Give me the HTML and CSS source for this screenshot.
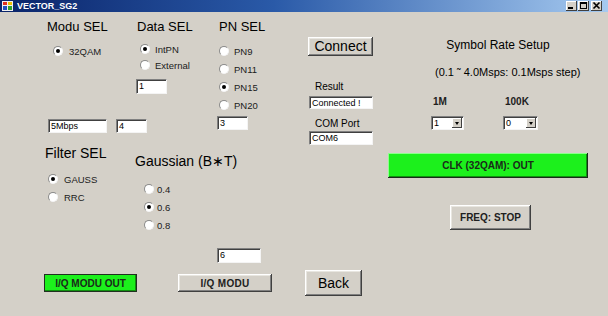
FILE: index.html
```html
<!DOCTYPE html>
<html lang="en">
<head>
  <meta charset="UTF-8" />
  <title>VECTOR_SG2</title>
  <link rel="stylesheet" href="styles.css">
</head>
<body>
  <div class="window">
    <div class="titlebar">
      <svg class="app-icon" width="11" height="10" viewBox="0 0 11 10">
        <rect x="0" y="0" width="11" height="10" fill="#f0f0f0"/>
        <rect x="1" y="1" width="4" height="3" fill="#e03020"/>
        <rect x="6" y="1" width="4" height="3" fill="#f0c000"/>
        <rect x="1" y="5" width="4" height="4" fill="#2050c0"/>
        <rect x="6" y="5" width="4" height="4" fill="#30a030"/>
      </svg>
      <span class="title">VECTOR_SG2</span>
      <div class="caption-buttons">
        <span class="cap-btn">
          <svg width="11" height="10" viewBox="0 0 11 10"><rect x="2" y="6" width="5" height="2" fill="#000"/></svg>
        </span>
        <span class="cap-btn">
          <svg width="11" height="10" viewBox="0 0 11 10"><rect x="2.5" y="1.5" width="6" height="6" fill="none" stroke="#000"/><rect x="2" y="1" width="7" height="2" fill="#000"/></svg>
        </span>
        <span class="cap-btn close">
          <svg width="11" height="10" viewBox="0 0 11 10"><path d="M2.5 1.5 L8.5 7.5 M8.5 1.5 L2.5 7.5" stroke="#000" stroke-width="1.6"/></svg>
        </span>
      </div>
    </div>

    <div class="form">
      <div class="left">
        <div class="top-band">
          <div class="col col-modu">
            <div class="heading">Modu SEL</div>
            <div class="radio-row"><span class="radio checked"></span>32QAM</div>
            <div class="field-row">
              <div class="textbox tb-rate">5Mbps</div>
              <div class="textbox tb-small">4</div>
            </div>
          </div>

          <div class="col col-data">
            <div class="heading">Data SEL</div>
            <div class="radio-list">
              <div class="radio-row"><span class="radio checked"></span>IntPN</div>
              <div class="radio-row"><span class="radio"></span>External</div>
            </div>
            <div class="textbox tb-small tb-data">1</div>
          </div>

          <div class="col col-pn">
            <div class="heading">PN SEL</div>
            <div class="radio-list">
              <div class="radio-row"><span class="radio"></span>PN9</div>
              <div class="radio-row"><span class="radio"></span>PN11</div>
              <div class="radio-row"><span class="radio checked"></span>PN15</div>
              <div class="radio-row"><span class="radio"></span>PN20</div>
            </div>
            <div class="textbox tb-small tb-pn">3</div>
          </div>

          <div class="col col-conn">
            <button class="btn btn-connect">Connect</button>
            <div class="small-label label-result">Result</div>
            <div class="textbox tb-conn">Connected !</div>
            <div class="small-label label-com">COM Port</div>
            <div class="textbox tb-conn tb-com">COM6</div>
          </div>
        </div>

        <div class="lower-band">
          <div class="col col-filter">
            <div class="heading heading-lg">Filter SEL</div>
            <div class="radio-list">
              <div class="radio-row"><span class="radio checked"></span>GAUSS</div>
              <div class="radio-row"><span class="radio"></span>RRC</div>
            </div>
          </div>

          <div class="col col-gauss">
            <div class="heading heading-lg">Gaussian (B&lowast;T)</div>
            <div class="radio-list">
              <div class="radio-row"><span class="radio"></span>0.4</div>
              <div class="radio-row"><span class="radio checked"></span>0.6</div>
              <div class="radio-row"><span class="radio"></span>0.8</div>
            </div>
          </div>

          <div class="col col-six">
            <div class="textbox tb-six">6</div>
          </div>
        </div>

        <div class="bottom-row">
          <button class="btn btn-green btn-iq-out">I/Q MODU OUT</button>
          <button class="btn btn-iq">I/Q MODU</button>
          <button class="btn btn-back">Back</button>
        </div>
      </div>

      <div class="right">
        <div class="rate-title">Symbol Rate Setup</div>
        <div class="rate-note">(0.1 &#732; 4.0Msps: 0.1Msps step)</div>
        <div class="rate-cols">
          <div class="rate-col">
            <div class="rate-label">1M</div>
            <div class="combo combo-1m"><span class="combo-text">1</span><span class="combo-btn"></span></div>
          </div>
          <div class="rate-col">
            <div class="rate-label">100K</div>
            <div class="combo combo-100k"><span class="combo-text">0</span><span class="combo-btn"></span></div>
          </div>
        </div>
        <button class="btn btn-green btn-clk">CLK (32QAM): OUT</button>
        <button class="btn btn-freq">FREQ: STOP</button>
      </div>
    </div>
  </div>
</body>
</html>
```

FILE: styles.css
```css
body {
  margin: 0;
  font-family: "Liberation Sans", Arial, sans-serif;
  color: #000;
  background-color: #d4d0c8;
}

.window {
  width: 608px;
  height: 316px;
  background-color: #d4d0c8;
  overflow: hidden;
}

/* title bar */
.titlebar {
  height: 12px;
  display: flex;
  align-items: center;
  padding-left: 2px;
  background: linear-gradient(to right, #0a246a 0%, #2a5aa8 45%, #a6caf0 100%);
}

.app-icon {
  display: block;
}

.title {
  margin-left: 4px;
  color: #fff;
  font-weight: bold;
  font-size: 9px;
  line-height: 12px;
}

.caption-buttons {
  margin-left: auto;
  margin-right: 6px;
  display: flex;
  gap: 1px;
}

.cap-btn {
  display: block;
  width: 11px;
  height: 10px;
  background-color: #d4d0c8;
  box-shadow: inset -1px -1px #404040, inset 1px 1px #fff;
}

.cap-btn svg {
  display: block;
}

.cap-btn.close {
  margin-left: 1px;
}

/* form */
.form {
  height: 304px;
  display: flex;
}

.left {
  width: 388px;
  display: flex;
  flex-direction: column;
}

.top-band {
  height: 133px;
  display: flex;
  padding-left: 44px;
}

.col {
  display: flex;
  flex-direction: column;
  align-items: flex-start;
}

.heading {
  font-size: 13px;
  line-height: 16px;
  margin-top: 7px;
  white-space: nowrap;
}

.heading-lg {
  font-size: 14px;
}

.radio-row {
  display: flex;
  align-items: center;
  gap: 6px;
  height: 18px;
  font-size: 9.5px;
  color: #202020;
  white-space: nowrap;
}

.radio {
  box-sizing: border-box;
  width: 10px;
  height: 10px;
  border-radius: 50%;
  background-color: #fff;
  border: 1px solid;
  border-color: #8a8a8a #f4f4f4 #f4f4f4 #8a8a8a;
  display: flex;
  align-items: center;
  justify-content: center;
}

.radio.checked::after {
  content: "";
  width: 4px;
  height: 4px;
  border-radius: 50%;
  background-color: #000;
}

.textbox {
  box-sizing: border-box;
  height: 14px;
  background-color: #fff;
  border: 1px solid;
  border-color: #808080 #f4f4f4 #f4f4f4 #808080;
  box-shadow: inset 1px 1px #404040;
  font-size: 9px;
  line-height: 12px;
  padding-left: 2px;
  white-space: nowrap;
  overflow: hidden;
}

.tb-small {
  width: 31px;
}

/* Modu SEL */
.col-modu {
  width: 92px;
}

.col-modu .heading {
  padding-left: 3px;
}

.col-modu .radio-row {
  margin-top: 7px;
  padding-left: 9px;
}

.field-row {
  display: flex;
  gap: 9px;
  margin-top: 59px;
  padding-left: 4px;
}

.tb-rate {
  width: 59px;
}

/* Data SEL */
.col-data {
  width: 81px;
}

.col-data .heading {
  padding-left: 1px;
}

.col-data .radio-list {
  margin-top: 6px;
}

.col-data .radio-row {
  height: 16px;
  padding-left: 4px;
  gap: 5px;
}

.tb-data {
  height: 15px;
  margin-top: 6px;
}

/* PN SEL */
.col-pn {
  width: 91px;
}

.col-pn .heading {
  padding-left: 2px;
}

.col-pn .radio-list {
  margin-top: 7px;
}

.col-pn .radio-row {
  padding-left: 2px;
  gap: 5px;
}

.tb-pn {
  margin-top: 2px;
}

/* connection */
.col-conn {
  width: 80px;
  padding-top: 25px;
}

.small-label {
  font-size: 10px;
  line-height: 12px;
  padding-left: 7px;
}

.label-result {
  margin-top: 25px;
}

.label-com {
  margin-top: 9px;
}

.tb-conn {
  width: 64px;
  margin-top: 3px;
  margin-left: 1px;
}

.tb-com {
  margin-top: 1px;
}

/* buttons */
.btn {
  box-sizing: border-box;
  padding: 0;
  font-family: "Liberation Sans", Arial, sans-serif;
  color: #000;
  background-color: #d4d0c8;
  border: none;
  box-shadow: inset -1px -1px #404040, inset 1px 1px #fff, inset -2px -2px #808080, inset 2px 2px #e8e6e0;
  cursor: pointer;
  white-space: nowrap;
}

.btn-green {
  background-color: #1cf01c;
  font-weight: bold;
  font-size: 10px;
  color: #1a2a1a;
}

.btn-connect {
  width: 65px;
  height: 19px;
  font-size: 14px;
}

.btn-back {
  width: 57px;
  height: 26px;
  font-size: 14px;
}

.btn-iq {
  width: 94px;
  height: 18px;
  font-size: 10px;
  font-weight: bold;
  letter-spacing: 0.3px;
  color: #202020;
}

.btn-iq-out {
  width: 93px;
  height: 18px;
  box-shadow: inset 0 0 0 1px #203020, inset -2px -2px #109010;
}

.btn-freq {
  width: 81px;
  height: 25px;
  font-size: 10px;
  font-weight: bold;
  color: #202020;
  margin-top: 27px;
  margin-left: 62px;
}

.btn-clk {
  width: 200px;
  height: 25px;
  margin-top: 23px;
  box-shadow: inset -1px -1px #1a2a1a, inset 1px 1px #8cff8c, inset -2px -2px #109010;
}

/* lower band */
.lower-band {
  height: 125px;
  display: flex;
  padding-left: 44px;
}

.col-filter {
  width: 91px;
}

.col-filter .heading {
  margin-top: 0;
  padding-left: 1px;
}

.col-filter .radio-list {
  margin-top: 9px;
}

.col-filter .radio-row {
  padding-left: 4px;
}

.col-gauss {
  width: 82px;
}

.col-gauss .heading {
  margin-top: 8px;
}

.col-gauss .radio-list {
  margin-top: 11px;
}

.col-gauss .radio-row {
  padding-left: 9px;
  gap: 3px;
}

.col-six {
  padding-top: 103px;
}

.tb-six {
  width: 44px;
  height: 15px;
}

.bottom-row {
  height: 26px;
  display: flex;
  align-items: center;
  padding-left: 44px;
  gap: 41px;
}

.bottom-row .btn-back {
  margin-left: -8px;
}

/* symbol rate panel */
.right {
  width: 220px;
  padding-top: 26px;
  display: flex;
  flex-direction: column;
  align-items: flex-start;
}

.rate-title {
  align-self: stretch;
  text-align: center;
  font-size: 12px;
  line-height: 14px;
}

.rate-note {
  margin-top: 14px;
  padding-left: 47px;
  font-size: 11px;
  line-height: 12px;
  white-space: nowrap;
}

.rate-cols {
  display: flex;
  margin-top: 18px;
  padding-left: 43px;
}

.rate-col {
  width: 72px;
}

.rate-label {
  padding-left: 2px;
  font-size: 10px;
  font-weight: bold;
  line-height: 12px;
  color: #202020;
}

.combo {
  box-sizing: border-box;
  margin-top: 8px;
  height: 14px;
  display: flex;
  background-color: #fff;
  border: 1px solid;
  border-color: #808080 #f4f4f4 #f4f4f4 #808080;
  box-shadow: inset 1px 1px #404040;
}

.combo-1m {
  width: 33px;
}

.combo-100k {
  width: 35px;
}

.combo-text {
  flex: 1;
  font-size: 9px;
  line-height: 12px;
  padding-left: 2px;
}

.combo-btn {
  width: 10px;
  margin: 1px 1px 1px 0;
  background-color: #d4d0c8;
  box-shadow: inset -1px -1px #404040, inset 1px 1px #fff;
  position: relative;
}

.combo-btn::after {
  content: "";
  position: absolute;
  left: 3px;
  top: 4px;
  border-left: 2px solid transparent;
  border-right: 2px solid transparent;
  border-top: 3px solid #000;
}
```
